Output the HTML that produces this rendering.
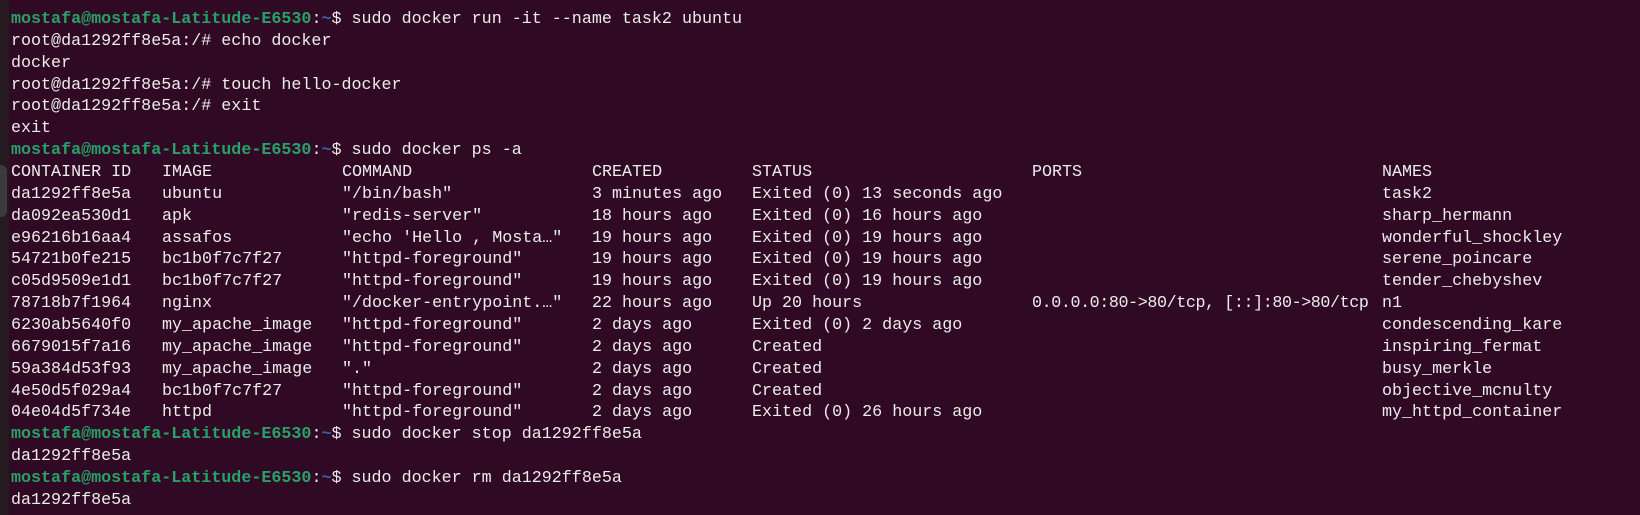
<!DOCTYPE html><html><head><style>
body{margin:0;width:1640px;height:515px;background:#300a24;overflow:hidden;position:relative;font-family:"Liberation Mono","DejaVu Sans Mono",monospace;font-size:16.7px;color:#ececec}
.strip{position:absolute;left:0;top:0;width:9px;height:515px;background:#241a20}
.thumb{position:absolute;left:0;top:165px;width:7px;height:52px;background:#3d3a3c;border-radius:0 6px 6px 0}
.l{position:absolute;left:11px;height:22px;line-height:22px;white-space:pre}
.c{position:absolute;white-space:pre}
.g{color:#26a269;font-weight:bold}.b{color:#3465a4;font-weight:bold}
</style></head><body><div class="strip"></div><div class="thumb"></div>
<div id="t"></div>
<script>
const P='<span class="g">mostafa@mostafa-Latitude-E6530</span>:<span class="b">~</span>$ ';
const X=[0,151,331,581,741,1021,1371];
const lines=[
P+'sudo docker run -it --name task2 ubuntu','root@da1292ff8e5a:/# echo docker','docker','root@da1292ff8e5a:/# touch hello-docker','root@da1292ff8e5a:/# exit','exit',P+'sudo docker ps -a',
['CONTAINER ID','IMAGE','COMMAND','CREATED','STATUS','PORTS','NAMES'],
['da1292ff8e5a','ubuntu','"/bin/bash"','3 minutes ago','Exited (0) 13 seconds ago','','task2'],
['da092ea530d1','apk','"redis-server"','18 hours ago','Exited (0) 16 hours ago','','sharp_hermann'],
['e96216b16aa4','assafos','"echo \'Hello , Mosta…"','19 hours ago','Exited (0) 19 hours ago','','wonderful_shockley'],
['54721b0fe215','bc1b0f7c7f27','"httpd-foreground"','19 hours ago','Exited (0) 19 hours ago','','serene_poincare'],
['c05d9509e1d1','bc1b0f7c7f27','"httpd-foreground"','19 hours ago','Exited (0) 19 hours ago','','tender_chebyshev'],
['78718b7f1964','nginx','"/docker-entrypoint.…"','22 hours ago','Up 20 hours','<span style="letter-spacing:-0.4px">0.0.0.0:80->80/tcp, [::]:80->80/tcp</span>','n1'],
['6230ab5640f0','my_apache_image','"httpd-foreground"','2 days ago','Exited (0) 2 days ago','','condescending_kare'],
['6679015f7a16','my_apache_image','"httpd-foreground"','2 days ago','Created','','inspiring_fermat'],
['59a384d53f93','my_apache_image','"."','2 days ago','Created','','busy_merkle'],
['4e50d5f029a4','bc1b0f7c7f27','"httpd-foreground"','2 days ago','Created','','objective_mcnulty'],
['04e04d5f734e','httpd','"httpd-foreground"','2 days ago','Exited (0) 26 hours ago','','my_httpd_container'],
P+'sudo docker stop da1292ff8e5a','da1292ff8e5a',P+'sudo docker rm da1292ff8e5a','da1292ff8e5a'];
let h='';const esc=s=>s.startsWith('<span')?s:s.replace(/&/g,'&amp;').replace(/</g,'&lt;').replace(/>/g,'&gt;');
lines.forEach((l,i)=>{const top=9+i*21.86;
if(Array.isArray(l)){h+=`<div class="l" style="top:${top}px">`+l.map((c,j)=>`<span class="c" style="left:${X[j]}px">${esc(c)}</span>`).join('')+'</div>';}
else h+=`<div class="l" style="top:${top}px">${l}</div>`;});
document.getElementById('t').innerHTML=h;
</script></body></html>
